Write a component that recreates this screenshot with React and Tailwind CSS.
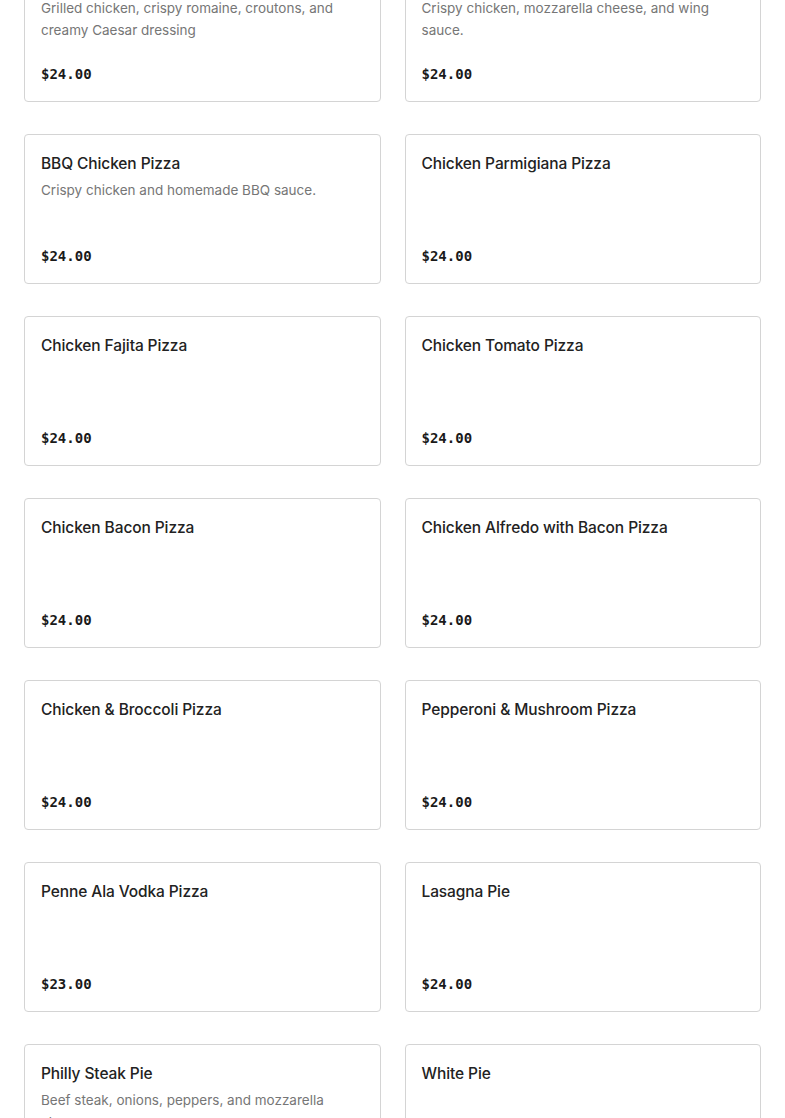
import React from "react";

const items = [
  { name: "Chicken Caesar Salad Pizza", desc: "Grilled chicken, crispy romaine, croutons, and creamy Caesar dressing", price: "$24.00" },
  { name: "Buffalo Chicken Pizza", desc: "Crispy chicken, mozzarella cheese, and wing sauce.", price: "$24.00" },
  { name: "BBQ Chicken Pizza", desc: "Crispy chicken and homemade BBQ sauce.", price: "$24.00" },
  { name: "Chicken Parmigiana Pizza", desc: "", price: "$24.00" },
  { name: "Chicken Fajita Pizza", desc: "", price: "$24.00" },
  { name: "Chicken Tomato Pizza", desc: "", price: "$24.00" },
  { name: "Chicken Bacon Pizza", desc: "", price: "$24.00" },
  { name: "Chicken Alfredo with Bacon Pizza", desc: "", price: "$24.00" },
  { name: "Chicken & Broccoli Pizza", desc: "", price: "$24.00" },
  { name: "Pepperoni & Mushroom Pizza", desc: "", price: "$24.00" },
  { name: "Penne Ala Vodka Pizza", desc: "", price: "$23.00" },
  { name: "Lasagna Pie", desc: "", price: "$24.00" },
  { name: "Philly Steak Pie", desc: "Beef steak, onions, peppers, and mozzarella cheese.", price: "$24.00" },
  { name: "White Pie", desc: "", price: "$24.00" },
];

function Card({ item }) {
  return (
    <div className="flex flex-col h-[150px] border border-[#d4d4d4] rounded-[4px] bg-white px-4 pt-[17px] pb-[17px] overflow-hidden">
      <div className="text-[15.5px] leading-[24px] font-medium text-[#222222] font-['Inter','Noto_Sans',sans-serif] tracking-[-0.1px]">
        {item.name}
      </div>
      {item.desc && (
        <div className="mt-[3px] text-[13.5px] leading-[22px] text-[#767676] font-['Inter','Noto_Sans',sans-serif] pr-4">
          {item.desc}
        </div>
      )}
      <div className="mt-auto text-[14px] leading-[20px] font-bold text-[#1a1a1a] font-['DejaVu_Sans_Mono','Liberation_Mono',monospace]">
        {item.price}
      </div>
    </div>
  );
}

export default function App() {
  return (
    <div className="bg-white min-h-[1118px] overflow-hidden">
      <div className="grid grid-cols-2 gap-x-6 gap-y-8 px-6 -mt-[48px] w-[785px]">
        {items.map((it, i) => (
          <Card key={i} item={it} />
        ))}
      </div>
    </div>
  );
}
